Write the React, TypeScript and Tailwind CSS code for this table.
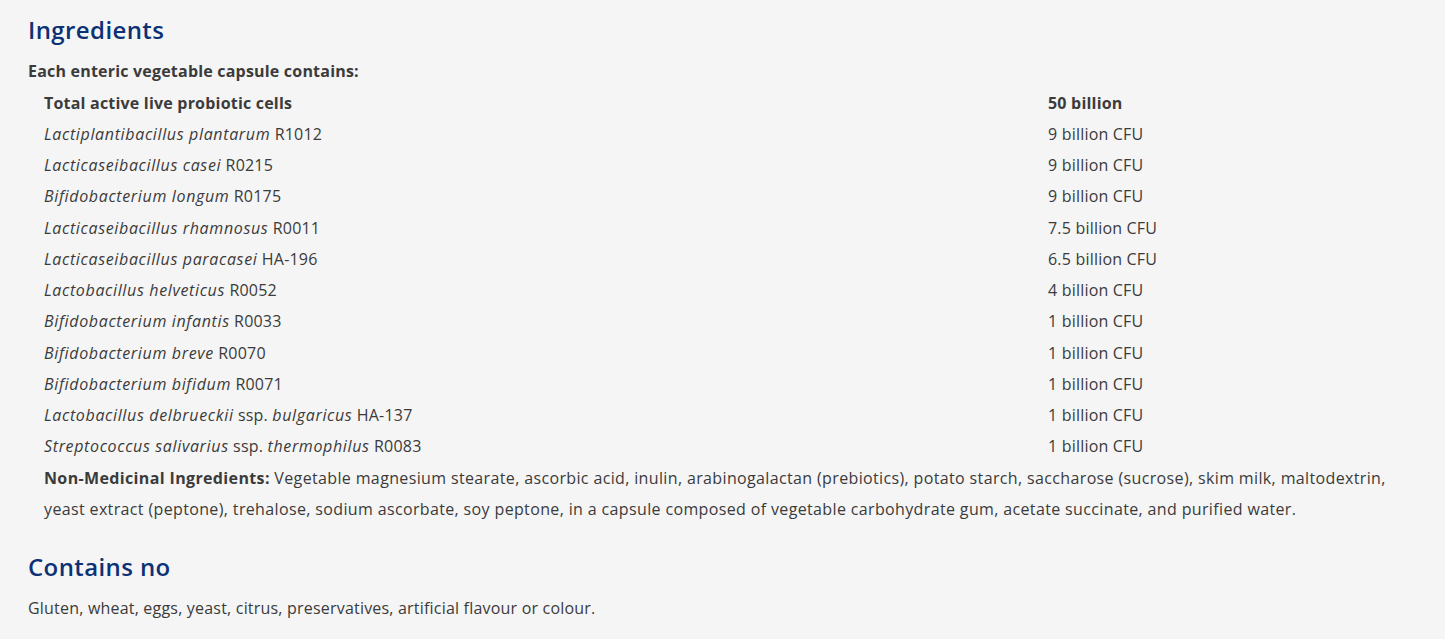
const rows: { name: React.ReactNode; amount: string }[] = [
  { name: <><i>Lactiplantibacillus plantarum</i> R1012</>, amount: "9 billion CFU" },
  { name: <><i>Lacticaseibacillus casei</i> R0215</>, amount: "9 billion CFU" },
  { name: <><i>Bifidobacterium longum</i> R0175</>, amount: "9 billion CFU" },
  { name: <><i>Lacticaseibacillus rhamnosus</i> R0011</>, amount: "7.5 billion CFU" },
  { name: <><i>Lacticaseibacillus paracasei</i> HA-196</>, amount: "6.5 billion CFU" },
  { name: <><i>Lactobacillus helveticus</i> R0052</>, amount: "4 billion CFU" },
  { name: <><i>Bifidobacterium infantis</i> R0033</>, amount: "1 billion CFU" },
  { name: <><i>Bifidobacterium breve</i> R0070</>, amount: "1 billion CFU" },
  { name: <><i>Bifidobacterium bifidum</i> R0071</>, amount: "1 billion CFU" },
  { name: <><i>Lactobacillus delbrueckii</i> ssp. <i>bulgaricus</i> HA-137</>, amount: "1 billion CFU" },
  { name: <><i>Streptococcus salivarius</i> ssp. <i>thermophilus</i> R0083</>, amount: "1 billion CFU" },
];

const App = () => {
  return (
    <div className="min-h-[639px] bg-[#f5f5f5] px-[28px] pt-[14px] text-[16px] tracking-[0.2px] text-[#3b3b3b] font-['Open_Sans',sans-serif]">
      <h2 className="text-[24px] font-semibold leading-[32px] tracking-[0.4px] text-[#0c3275]">Ingredients</h2>
      <p className="mt-[10px] font-bold leading-[31.5px]">Each enteric vegetable capsule contains:</p>
      <div className="pl-[16px] [&_i]:tracking-[0.65px]">
        <div className="flex leading-[31.25px] font-bold">
          <div className="w-[1004px]">Total active live probiotic cells</div>
          <div>50 billion</div>
        </div>
        {rows.map((row, i) => (
          <div key={i} className="flex leading-[31.25px]">
            <div className="w-[1004px]">{row.name}</div>
            <div>{row.amount}</div>
          </div>
        ))}
        <p className="max-w-[1356px] leading-[31.3px] tracking-[0.36px]">
          <b>Non-Medicinal Ingredients:</b> Vegetable magnesium stearate, ascorbic acid, inulin, arabinogalactan (prebiotics),
          potato starch, saccharose (sucrose), skim milk, maltodextrin, yeast extract (peptone), trehalose, sodium ascorbate,
          soy peptone, in a capsule composed of vegetable carbohydrate gum, acetate succinate, and purified water.
        </p>
      </div>
      <h2 className="mt-[26px] text-[24px] font-semibold leading-[32px] tracking-[0.4px] text-[#0c3275]">Contains no</h2>
      <p className="mt-[10px] leading-[31px]">Gluten, wheat, eggs, yeast, citrus, preservatives, artificial flavour or colour.</p>
    </div>
  );
};

export default App;
